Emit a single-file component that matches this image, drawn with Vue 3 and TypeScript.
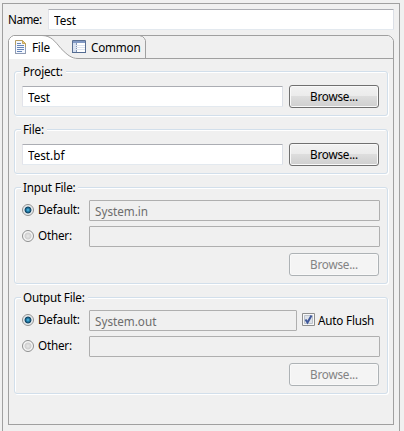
<script setup lang="ts">
import { ref } from 'vue'

interface Stream {
  title: string
  system: string
  flush: boolean
}

const name = ref('Test')
const sources = ref([
  { title: 'Project:', value: 'Test' },
  { title: 'File:', value: 'Test.bf' },
])
const streams: Stream[] = [
  { title: 'Input File:', system: 'System.in', flush: false },
  { title: 'Output File:', system: 'System.out', flush: true },
]
</script>

<template>
  <main class="dialog">
    <label class="name-row">
      <span class="name-label">Name:</span>
      <input v-model="name" class="field name-field" type="text" />
    </label>

    <section class="folder">
      <nav class="tabs">
        <svg class="tab-shape" width="386" height="24" viewBox="0 0 386 24">
          <path d="M1 24V5.5L2 3.5L3.5 2L5.5 1H35C43 1 47 7 53 14C59 20 64 23.5 70 23.5V24Z" fill="#fff" />
          <path
            d="M.5 24V5.5L1.5 3.5L3.5 1.5L5.5 .5H380.5L382.5 1.5L384.5 3.5L385.5 5.5V24M34 .5C43 .5 47 6.500 53 13.500C59 19.500 63 23.500 70 23.500H385.500M131.500 .5L134.500 1.500L136.500 3.500L137.500 5.500V23.500"
            fill="none" stroke="#a0a0a0"
          />
        </svg>
        <div class="tab file-tab">
          <svg width="12" height="14" viewBox="0 0 12 14">
            <path d="M.5 .5H7.500L10.500 3.500V13.500H.5Z" fill="#f4f8ff" stroke="#b59c62" />
            <path d="M.5 5V13.500H10.500V7" fill="none" stroke="#8e9bb5" />
            <path d="M7.500 .5V3.500H10.500Z" fill="#e9ce86" stroke="#c6a65b" />
            <path d="M2 3.500H6M2 5.500H9M2 7.500H9M2 9.500H9M2 11.500H7" stroke="#6685b8" />
          </svg>
          <span>File</span>
        </div>
        <div class="tab common-tab">
          <svg width="14" height="13" viewBox="0 0 14 13">
            <path d="M.5 .5H13.500V12.500H.5Z" fill="#fff" stroke="#5b7093" />
            <path d="M1 1H13V3H1Z" fill="#8199c4" />
            <path d="M1 3H4V12H1Z" fill="#d5e0f1" />
            <path d="M4.500 3V12" stroke="#8294b4" />
            <path d="M1 5.500H13M1 7.500H13M1 9.500H13" stroke="#dde4f0" />
            <path d="M0 12.500H14" stroke="#536b91" />
          </svg>
          <span>Common</span>
        </div>
      </nav>

      <div class="page">
        <section v-for="source in sources" :key="source.title" class="group">
          <h2>{{ source.title }}</h2>
          <div class="source-row">
            <input v-model="source.value" class="field" type="text" />
            <button type="button">Browse...</button>
          </div>
        </section>

        <section v-for="stream in streams" :key="stream.title" class="group stream">
          <h2>{{ stream.title }}</h2>
          <div class="stream-row">
            <span class="radio selected"></span>
            <span class="option">Default:</span>
            <input class="field off" :value="stream.system" type="text" disabled />
            <label v-if="stream.flush" class="flush">
              <svg width="13" height="13" viewBox="0 0 13 13">
                <path d="M.5 .5H12.500V12.500H.5Z" fill="#f8f8f8" stroke="#8e8f8f" />
                <path d="M2.500 2.500H10.500V10.500H2.500Z" fill="#dfe3e9" stroke="#bdc3cc" />
                <path d="M3.500 6.500L5.500 9.500L9.500 2.500" fill="none" stroke="#40599b" stroke-width="2" />
              </svg>
              <span>Auto Flush</span>
            </label>
          </div>
          <div class="stream-row">
            <span class="radio"></span>
            <span class="option">Other:</span>
            <input class="field off" type="text" disabled />
          </div>
          <button type="button" disabled>Browse...</button>
        </section>
      </div>
    </section>
  </main>
</template>

<style>
body {
  background: #f0f0f0;
  overflow: hidden;
}
</style>

<style scoped>
* {
  box-sizing: border-box;
}

.dialog {
  width: 398px;
  height: 428px;
  margin: 3px 0 0 2px;
  padding: 5px;
  border: 1px solid #a0a0a0;
  border-bottom: 0;
  color: #000;
  font: 11.7px/16px "Noto Sans", "Open Sans", sans-serif;
  letter-spacing: -0.2px;
  white-space: nowrap;
}

.name-row {
  display: flex;
  height: 21px;
}

.name-label {
  width: 40px;
  padding: 2px 0 0;
  letter-spacing: -0.5px;
}

.field {
  min-width: 0;
  height: 21px;
  margin: 0;
  padding: 0 5px;
  border: 1px solid #e2e3ea;
  border-top-color: #abadb3;
  border-right-color: #dbdfe6;
  border-bottom-color: #e3e9ef;
  border-radius: 1px;
  background: #fff;
  color: #000;
  font: inherit;
  letter-spacing: 0;
}

.name-field {
  flex: 1;
}

.folder {
  width: 386px;
  height: 390px;
  margin-top: 5px;
}

.tabs {
  position: relative;
  display: flex;
  height: 24px;
}

.tab-shape {
  position: absolute;
  top: 0;
  left: 0;
}

.tab {
  position: relative;
  display: flex;
  align-items: flex-start;
}

.tab svg {
  flex: none;
}

.file-tab {
  width: 64px;
  padding: 5px 0 0 7px;
}

.file-tab span {
  margin: -1px 0 0 5px;
}

.common-tab {
  padding: 5px 0 0;
}

.common-tab span {
  margin: -1px 0 0 5px;
}

.page {
  height: 366px;
  padding: 12px 4px 0 5px;
  border: 1px solid #a0a0a0;
  border-top: 0;
}

.group {
  width: 374px;
  height: 45px;
  margin-bottom: 13px;
  padding: 0 7px;
  border: 1px solid #d2dfeb;
  border-radius: 3px;
  box-shadow: inset 1px 1px #fff, 1px 1px #fff;
}

.group h2 {
  width: fit-content;
  height: 16px;
  margin: -9px 0 0 -1px;
  padding: 0 3px 0 2px;
  background: #f0f0f0;
  font: inherit;
}

.source-row {
  display: flex;
  align-items: center;
  height: 23px;
  margin-top: 6px;
}

.source-row .field {
  width: 261px;
}

button {
  width: 90px;
  height: 23px;
  margin: 0;
  padding: 0 0 1px;
  border: 1px solid #707070;
  border-radius: 3px;
  background: linear-gradient(#f2f2f2 0, #ebebeb 48%, #dddddd 50%, #cfcfcf 100%);
  box-shadow: inset 0 0 0 1px #f9f9f9;
  color: #000;
  font: inherit;
  letter-spacing: -0.2px;
}

.source-row button {
  margin-left: 6px;
}

button:disabled {
  border-color: #adb2b5;
  background: #f4f4f4;
  color: #838383;
}

.stream {
  height: 97px;
}

.stream-row {
  display: flex;
  align-items: center;
  width: 358px;
  height: 21px;
  margin-bottom: 5px;
}

.stream h2 {
  margin-bottom: 5px;
}

.stream > button {
  display: block;
  margin: 6px 0 0 267px;
}

.radio {
  flex: none;
  width: 12px;
  height: 12px;
  margin-bottom: 1px;
  border: 1px solid #8e8f8f;
  border-radius: 50%;
  background: radial-gradient(circle, #e8e8e8 0, #cfcfcf 3px, #f5f5f5 4px);
}

.radio.selected {
  background: radial-gradient(circle at 50% 50%, #72c8ec 0, #278fbd 1.2px, #12415f 3px, #d5dde2 3.8px, #f5f5f5 5px);
}

.option {
  flex: none;
  width: 51px;
  margin: 0 0 3px 4px;
}

.stream-row .field {
  flex: 1;
}

.field.off {
  border-color: #afafaf;
  background: #f0f0f0;
  color: #6d6d6d;
}

.flush {
  display: flex;
  align-items: center;
  width: 78px;
  margin: 0 0 2px 5px;
}

.flush span {
  margin: 0 0 0 3px;
}
</style>
